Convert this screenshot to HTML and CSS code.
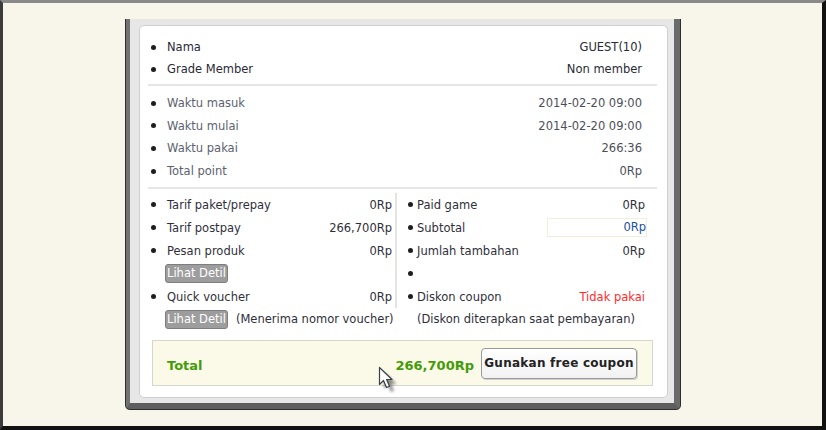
FILE: index.html
```html
<!DOCTYPE html>
<html>
<head>
<meta charset="utf-8">
<link rel="stylesheet" href="styles.css">
</head>
<body>
<div class="screen">
  <div class="window">
    <div class="panel">
      <div class="section sec-top">
        <div class="row dark"><span class="dot"></span><span class="label">Nama</span><span class="value">GUEST(10)</span></div>
        <div class="row dark"><span class="dot"></span><span class="label">Grade Member</span><span class="value">Non member</span></div>
      </div>
      <div class="sep"></div>
      <div class="section sec-time">
        <div class="row muted"><span class="dot"></span><span class="label">Waktu masuk</span><span class="value">2014-02-20 09:00</span></div>
        <div class="row muted"><span class="dot"></span><span class="label">Waktu mulai</span><span class="value">2014-02-20 09:00</span></div>
        <div class="row muted"><span class="dot"></span><span class="label">Waktu pakai</span><span class="value">266:36</span></div>
        <div class="row muted"><span class="dot"></span><span class="label">Total point</span><span class="value">0Rp</span></div>
      </div>
      <div class="sep"></div>
      <div class="cols">
        <div class="col col-left">
          <div class="crow"><span class="dot"></span><span class="label">Tarif paket/prepay</span><span class="value">0Rp</span></div>
          <div class="crow"><span class="dot"></span><span class="label">Tarif postpay</span><span class="value">266,700Rp</span></div>
          <div class="crow"><span class="dot"></span><span class="label">Pesan produk</span><span class="value">0Rp</span></div>
          <div class="btnrow"><span class="detil">Lihat Detil</span></div>
          <div class="crow"><span class="dot"></span><span class="label">Quick voucher</span><span class="value">0Rp</span></div>
        </div>
        <div class="col col-right">
          <div class="crow"><span class="dot"></span><span class="label">Paid game</span><span class="value">0Rp</span></div>
          <div class="crow"><span class="dot"></span><span class="label">Subtotal</span><span class="value subtotal">0Rp</span></div>
          <div class="crow"><span class="dot"></span><span class="label">Jumlah tambahan</span><span class="value">0Rp</span></div>
          <div class="crow"><span class="dot"></span><span class="label"></span></div>
          <div class="crow"><span class="dot"></span><span class="label">Diskon coupon</span><span class="value red">Tidak pakai</span></div>
        </div>
        <div class="foot-left"><span class="detil">Lihat Detil</span><span class="note">(Menerima nomor voucher)</span></div>
        <div class="foot-right"><span class="note">(Diskon diterapkan saat pembayaran)</span></div>
      </div>
      <div class="total">
        <span class="total-label">Total</span>
        <span class="total-amount">266,700Rp</span>
        <span class="coupon-btn">Gunakan free coupon</span>
        <svg class="cursor" width="22" height="28" viewBox="0 0 22 28">
          <defs>
            <filter id="sh" x="-50%" y="-50%" width="200%" height="200%">
              <feGaussianBlur stdDeviation="1.6"/>
            </filter>
          </defs>
          <path d="M3.5 3.5 L3.5 20.5 L7.5 16.5 L10.5 23.5 L13.5 22.2 L10.6 15.5 L16 15.5 Z" fill="#000" opacity="0.45" filter="url(#sh)" transform="translate(2.5,2.5)"/>
          <path d="M1.5 1.5 L1.5 18.5 L5.5 14.5 L8.5 21.5 L11.5 20.2 L8.6 13.5 L14 13.5 Z" fill="#fff" stroke="#3a3f4a" stroke-width="1.2" stroke-linejoin="round"/>
        </svg>
      </div>
    </div>
  </div>
</div>
</body>
</html>
```
FILE: styles.css
```css
html, body {
  margin: 0;
  padding: 0;
}
body {
  background: #f7f5e9;
  font-family: "DejaVu Sans", Verdana, sans-serif;
  font-size: 11.5px;
  color: #333;
}
.screen {
  box-sizing: border-box;
  width: 826px;
  height: 430px;
  background: #f8f6ea;
  border-top: 3px solid #8a8a8a;
  border-left: 3px solid #3c3c3c;
  border-right: 4px solid #111;
  border-bottom: 4px solid #111;
  padding: 16px 0 0 123px;
  display: flex;
  align-items: flex-start;
}
.window {
  box-sizing: border-box;
  width: 554px;
  height: 390px;
  background: #e7e7e7;
  border-left: 4px solid #727272;
  border-right: 6px solid #6a6a6a;
  border-bottom: 6px solid #5e5e5e;
  border-radius: 0 0 4px 4px;
  box-shadow: -1px 0 0 #2e2e2e, 1px 0 0 #2e2e2e, 0 1px 0 #2e2e2e;
  padding: 6px 6px 5px 9px;
}
.panel {
  box-sizing: border-box;
  height: 373px;
  background: #fff;
  border: 1px solid #cfcfcf;
  border-radius: 5px;
  padding-top: 10px;
  position: relative;
}
.section {
  margin: 0 10px 0 8px;
}
.sec-top {
  padding-bottom: 4px;
}
.sec-time {
  padding-top: 6px;
  padding-bottom: 5px;
}
.row {
  display: flex;
  align-items: center;
  height: 22px;
  padding-left: 3px;
  padding-right: 15px;
}
.sec-time .row {
  height: 22.6px;
}
.dot {
  flex: none;
  width: 5px;
  height: 5px;
  border-radius: 50%;
  background: #1e1e1e;
  margin-right: 11px;
}
.label {
  flex: 1;
}
.value {
  text-align: right;
}
.dark {
  color: #2a2a36;
}
.muted {
  color: #5b6270;
}
.muted .value {
  color: #4c4f58;
}
.sep {
  height: 2px;
  background: #e6e6e6;
  margin: 0 10px 0 8px;
}
.cols {
  margin: 0 10px 0 8px;
  padding-top: 4px;
  display: grid;
  grid-template-columns: 249px 1fr;
  color: #2f2f3a;
}
.col-left {
  border-right: 2px solid #e4e4e4;
  padding-right: 3px;
}
.col-right {
  padding-left: 11px;
  padding-right: 12px;
}
.crow {
  display: flex;
  align-items: center;
  height: 23px;
}
.col-left .crow {
  padding-left: 3px;
}
.col-right .dot {
  margin-right: 4px;
}
.btnrow {
  height: 23px;
  display: flex;
  align-items: center;
  padding-left: 17px;
}
.detil {
  box-sizing: border-box;
  display: inline-block;
  height: 19px;
  line-height: 17px;
  padding: 0 1px;
  font-size: 11.5px;
  color: #fff;
  background: #9d9d9d;
  border: 1px solid #7e7e7e;
  border-radius: 3px;
}
.subtotal {
  box-sizing: border-box;
  width: 100px;
  height: 19px;
  line-height: 17px;
  border: 1px solid #f0efdc;
  padding-right: 0;
  margin-right: -2px;
  color: #1d4fa6;
}
.red {
  color: #ff2a2a;
}
.foot-left {
  display: flex;
  align-items: center;
  height: 22px;
  padding-left: 17px;
  gap: 8px;
}
.foot-right {
  display: flex;
  align-items: center;
  height: 22px;
  padding-left: 20px;
}
.note {
  color: #2f2f3a;
}
.total {
  box-sizing: border-box;
  margin: 10px 14px 0 12px;
  height: 46px;
  background: #fbfae8;
  border: 1px solid #d6d6cf;
  display: flex;
  align-items: center;
  padding: 0 15px 0 14px;
  position: relative;
}
.total-label, .total-amount {
  font-weight: bold;
  font-size: 13px;
  color: #449a0b;
  margin-top: 4px;
}
.total-label {
  flex: 1;
}
.total-amount {
  margin-right: 7px;
}
.coupon-btn {
  box-sizing: border-box;
  width: 156px;
  height: 31px;
  display: flex;
  align-items: center;
  justify-content: center;
  font-weight: bold;
  font-size: 12px;
  letter-spacing: 0.25px;
  color: #222;
  background: linear-gradient(#ffffff, #f2f2f2);
  border: 1px solid #9a9a9a;
  border-radius: 4px;
  box-shadow: 1px 1px 0 #d0d0d0;
}
.cursor {
  position: absolute;
  left: 225px;
  top: 25px;
}
```
